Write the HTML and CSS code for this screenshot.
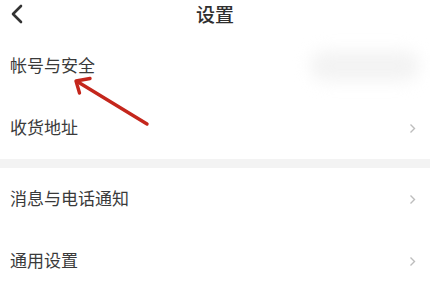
FILE: index.html
```html
<!DOCTYPE html>
<html lang="zh">
<head>
<meta charset="utf-8">
<link rel="stylesheet" href="styles.css">
</head>
<body>
<div class="page">
  <header class="nav">
    <svg class="back" width="14" height="20" viewBox="0 0 14 20"><polyline points="11,2 3,10 11,18" fill="none" stroke="#333" stroke-width="2.6" stroke-linecap="round" stroke-linejoin="round"/></svg>
    <h1 class="title">设置</h1>
  </header>
  <ul class="list">
    <li class="row"><span class="label">帐号与安全</span><span class="blurred"></span></li>
    <li class="row"><span class="label">收货地址</span><svg class="chev" width="7" height="11" viewBox="0 0 7 11"><polyline points="1.5,1.5 5.5,5.5 1.5,9.5" fill="none" stroke="#bdbdbd" stroke-width="1.4"/></svg></li>
  </ul>
  <div class="band"></div>
  <ul class="list">
    <li class="row"><span class="label">消息与电话通知</span><svg class="chev" width="7" height="11" viewBox="0 0 7 11"><polyline points="1.5,1.5 5.5,5.5 1.5,9.5" fill="none" stroke="#bdbdbd" stroke-width="1.4"/></svg></li>
    <li class="row"><span class="label">通用设置</span><svg class="chev" width="7" height="11" viewBox="0 0 7 11"><polyline points="1.5,1.5 5.5,5.5 1.5,9.5" fill="none" stroke="#bdbdbd" stroke-width="1.4"/></svg></li>
  </ul>
  <svg class="arrow" width="430" height="281" viewBox="0 0 430 281">
    <line x1="147" y1="124" x2="78" y2="82" stroke="#c4261c" stroke-width="3.4" stroke-linecap="round"/>
    <polyline points="90,78.5 76,81 79.5,93" fill="none" stroke="#c4261c" stroke-width="3.4" stroke-linecap="round" stroke-linejoin="round"/>
  </svg>
</div>
</body>
</html>
```
FILE: styles.css
```css
* { box-sizing: border-box; }
html, body { margin: 0; padding: 0; background: #fff; }
body {
  font-family: "Noto Sans CJK SC", "Noto Sans", sans-serif;
  color: #333;
  overflow: hidden;
}
.page {
  position: relative;
  width: 430px;
  height: 281px;
  overflow: hidden;
}
.nav {
  position: relative;
  height: 28px;
  margin-bottom: 7px;
  display: flex;
  align-items: center;
  justify-content: center;
}
.back {
  position: absolute;
  left: 10px;
  top: 4px;
}
.title {
  margin: 0;
  font-size: 19px;
  font-weight: 500;
  line-height: 28px;
  color: #2f2f2f;
}
.list {
  list-style: none;
  margin: 0;
  padding: 0;
}
.row {
  height: 62px;
  display: flex;
  align-items: center;
  justify-content: space-between;
  padding: 0 14px 0 10px;
}
.label {
  font-size: 17px;
  line-height: 20px;
  color: #3a3a3a;
  position: relative;
  top: -1px;
}
.chev { display: block; }
.blurred {
  width: 110px;
  height: 30px;
  margin-right: -4px;
  border-radius: 15px;
  background: #f3f3f3;
  filter: blur(8px);
}
.band {
  height: 9px;
  background: #f3f3f3;
}
.arrow {
  position: absolute;
  left: 0;
  top: 0;
  pointer-events: none;
}
```
